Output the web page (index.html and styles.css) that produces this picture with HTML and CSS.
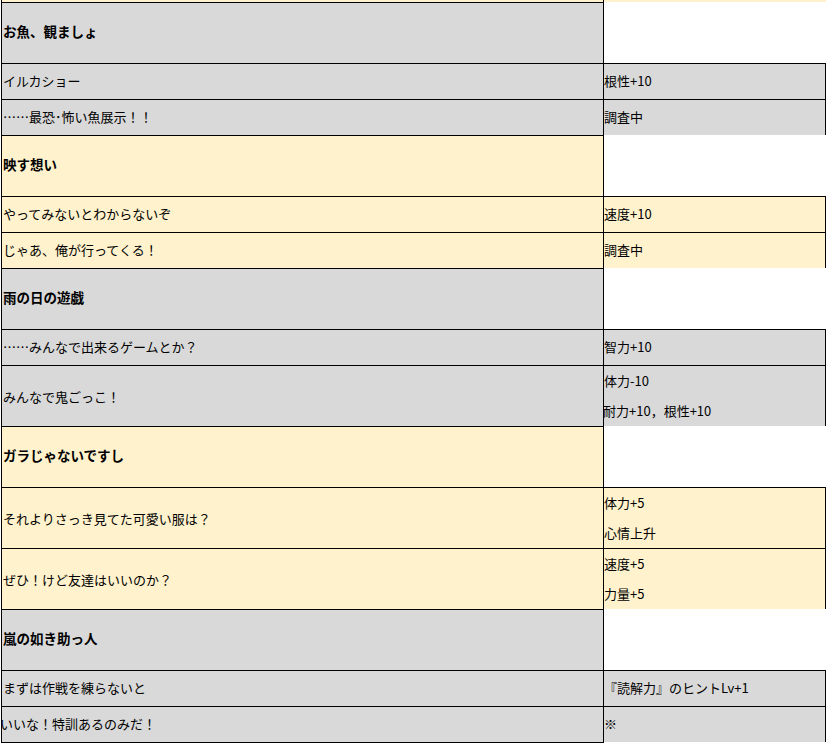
FILE: index.html
```html
<!DOCTYPE html>
<html lang="ja">
<head>
<meta charset="utf-8">
<title>イベント一覧</title>
<link rel="stylesheet" href="styles.css">
</head>
<body>
<div class="sheet">
  <div class="c l cream strip"></div><div class="c r cream strip"></div>

  <div class="c l grey title">お魚、観ましょ</div><div class="c r blank title"></div>
  <div class="c l grey data">イルカショー</div><div class="c r grey data rd">根性+10</div>
  <div class="c l grey data">……最恐･怖い魚展示！！</div><div class="c r grey data rd">調査中</div>

  <div class="c l cream title">映す想い</div><div class="c r blank title"></div>
  <div class="c l cream data">やってみないとわからないぞ</div><div class="c r cream data rd">速度+10</div>
  <div class="c l cream data">じゃあ、俺が行ってくる！</div><div class="c r cream data rd">調査中</div>

  <div class="c l grey title">雨の日の遊戯</div><div class="c r blank title"></div>
  <div class="c l grey data">……みんなで出来るゲームとか？</div><div class="c r grey data rd">智力+10</div>
  <div class="c l grey tall">みんなで鬼ごっこ！</div><div class="c r grey tall rd multi"><span>体力-10</span><span class="clip">耐力+10，根性+10</span></div>

  <div class="c l cream title">ガラじゃないですし</div><div class="c r blank title"></div>
  <div class="c l cream tall">それよりさっき見てた可愛い服は？</div><div class="c r cream tall rd multi"><span>体力+5</span><span>心情上升</span></div>
  <div class="c l cream tall">ぜひ！けど友達はいいのか？</div><div class="c r cream tall rd multi"><span>速度+5</span><span>力量+5</span></div>

  <div class="c l grey title">嵐の如き助っ人</div><div class="c r blank title"></div>
  <div class="c l grey data">まずは作戦を練らないと</div><div class="c r grey data rd">『読解力』のヒントLv+1</div>
  <div class="c l grey data"><span class="clip2">いいな！特訓あるのみだ！</span></div><div class="c r grey data rd">※</div>

  <div class="c l cream title"></div><div class="c r blank title"></div>
</div>
</body>
</html>
```
FILE: styles.css
```css
html, body {
  margin: 0;
  padding: 0;
  background: #ffffff;
  overflow: hidden;
}

.sheet {
  display: grid;
  grid-template-columns: 603px 222px;
  margin-left: 1px;
  font-family: "Noto Sans CJK JP", "Liberation Sans", sans-serif;
  font-size: 13px;
  color: #000;
}

.c {
  box-sizing: border-box;
  display: flex;
  align-items: center;
  white-space: nowrap;
  overflow: hidden;
}

.l {
  border-left: 1px solid #000;
  border-right: 1px solid #000;
  border-top: 1px solid #000;
  padding-left: 1px;
}

.r {
  padding-left: 0;
}

.rd {
  border-top: 1px solid #000;
  border-right: 1px solid #000;
}

.strip { height: 2px; }
.strip.l { border-top: none; }

.title { height: 61px; }
.data { height: 36px; padding-bottom: 2px; }
.tall { height: 61px; }

.l.title {
  font-weight: bold;
  font-size: 13.5px;
  padding-bottom: 5px;
}

.grey { background: #d9d9d9; }
.cream { background: #fff2cc; }
.blank { background: #ffffff; }

.multi {
  flex-direction: column;
  align-items: flex-start;
  justify-content: center;
  line-height: 30px;
  padding-bottom: 1px;
}

.clip { margin-left: -1px; }
.clip2 { margin-left: -3px; }
```
